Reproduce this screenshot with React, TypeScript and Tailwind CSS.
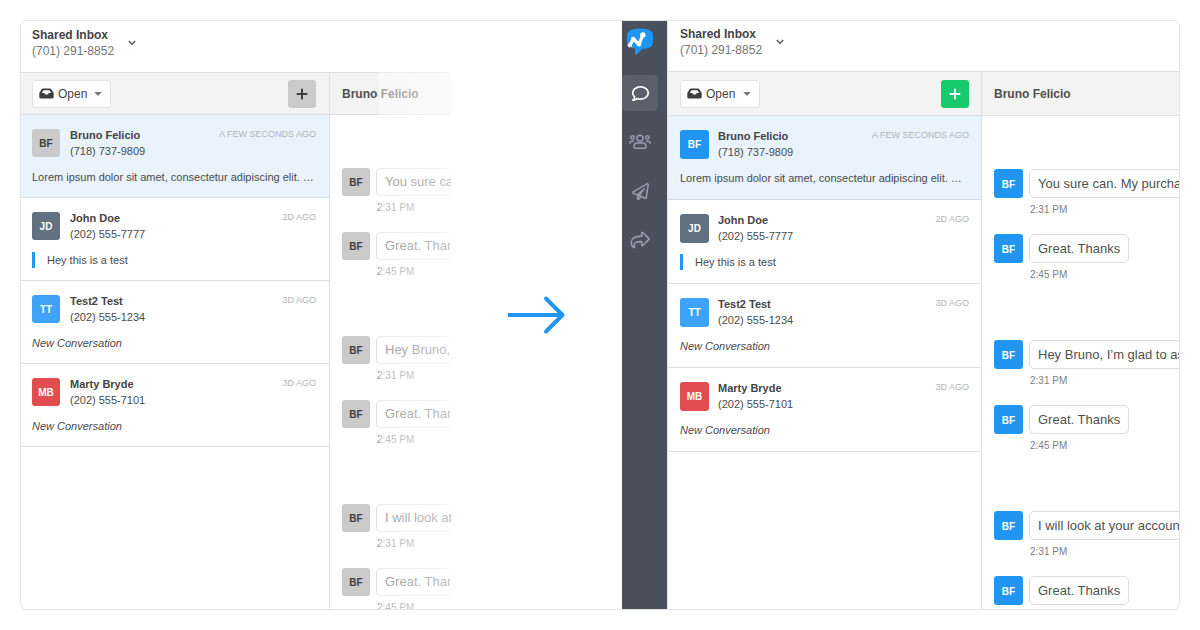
import React from "react";
import { FaRegComment, FaRegPaperPlane } from "react-icons/fa";

type Variant = "before" | "after";

type Conversation = {
  initials: string;
  name: string;
  phone: string;
  time: string;
  preview: string;
  kind: "text" | "quote" | "system";
  color: string;
};

const conversations: Conversation[] = [
  {
    initials: "BF",
    name: "Bruno Felicio",
    phone: "(718) 737-9809",
    time: "A FEW SECONDS AGO",
    preview: "Lorem ipsum dolor sit amet, consectetur adipiscing elit. …",
    kind: "text",
    color: "",
  },
  {
    initials: "JD",
    name: "John Doe",
    phone: "(202) 555-7777",
    time: "2D AGO",
    preview: "Hey this is a test",
    kind: "quote",
    color: "bg-[#627180] text-white",
  },
  {
    initials: "TT",
    name: "Test2 Test",
    phone: "(202) 555-1234",
    time: "3D AGO",
    preview: "New Conversation",
    kind: "system",
    color: "bg-[#3fa2f9] text-white",
  },
  {
    initials: "MB",
    name: "Marty Bryde",
    phone: "(202) 555-7101",
    time: "3D AGO",
    preview: "New Conversation",
    kind: "system",
    color: "bg-[#e14d50] text-white",
  },
];

const messageGroups = [
  ["You sure can. My purchase", "Great. Thanks"],
  ["Hey Bruno, I’m glad to assist", "Great. Thanks"],
  ["I will look at your account", "Great. Thanks"],
];

const ownColor = {
  before: "bg-[#cacaca] text-[#3d3d3d]",
  after: "bg-[#2095f2] text-white",
};

function Avatar({ initials, color, variant }: { initials: string; color: string; variant: Variant }) {
  const size = variant === "after" ? "size-[29px]" : "size-7";
  return (
    <span className={`flex shrink-0 items-center justify-center rounded-[3px] pt-px text-[10px] font-bold ${size} ${color}`}>
      {initials}
    </span>
  );
}

function InboxHeader({ variant }: { variant: Variant }) {
  const box = variant === "after" ? "h-[51px] pl-3 pt-[5px]" : "h-[52px] pl-[11px] pt-1.5";
  return (
    <header className={`shrink-0 border-b border-[#dfdfdf] ${box}`}>
      <button type="button" aria-haspopup="menu" className="flex items-center gap-3.5 text-left">
        <span className="flex flex-col text-[12px] leading-4 whitespace-nowrap">
          <strong className="text-[#444444]">Shared Inbox</strong>
          <span className="text-[#757575]">(701) 291-8852</span>
        </span>
        <svg viewBox="0 0 8 6" className="h-1.5 w-2" fill="none" stroke="#666" strokeWidth="1.6" aria-hidden="true">
          <path d="M0.8 1 L4 4.4 L7.2 1" />
        </svg>
      </button>
    </header>
  );
}

function Toolbar({ variant }: { variant: Variant }) {
  const after = variant === "after";
  return (
    <div
      className={`flex shrink-0 items-center justify-between border-b border-[#dfdfdf] bg-[#f3f3f3] ${
        after ? "h-11 pl-3 pr-3" : "h-[42px] pl-[11px] pr-[13px]"
      }`}
    >
      <label
        className={`flex h-7 items-center rounded-[3px] border border-[#e2e2e2] bg-white px-1.5 ${
          after ? "w-20" : "w-[79px]"
        }`}
      >
        <svg viewBox="0 0 15 11" className="h-[11px] w-[15px] shrink-0" fill="#3d3d3d" aria-hidden="true">
          <path
            fillRule="evenodd"
            d="M4.300.5h6.400c.7 0 1.200.3 1.600.8l2.100 3.200c.2.3.3.7.3 1v3.600c0 .8-.6 1.400-1.400 1.400H1.700C.9 10.500.3 9.900.3 9.100V5.500c0-.3.1-.7.3-1l2.100-3.200c.4-.5.900-.8 1.600-.8zM4.500 2.300 2.700 5.100h2.600l.9 1.500h2.600l.9-1.500h2.600L10.500 2.300z"
          />
        </svg>
        <select aria-label="Conversation status" className="ml-1 flex-1 appearance-none bg-transparent text-[12px] text-[#444444] outline-none">
          <option>Open</option>
        </select>
        <svg viewBox="0 0 8 4" className="mr-0.5 h-1 w-2 shrink-0" fill="#777" aria-hidden="true">
          <path d="M0.300 0h7.400L4 4z" />
        </svg>
      </label>
      <button
        type="button"
        aria-label="New conversation"
        className={`flex size-7 items-center justify-center rounded-[3px] ${
          after ? "bg-[#17cb6c] text-white" : "bg-[#cacaca] text-[#3d3d3d]"
        }`}
      >
        <svg viewBox="0 0 12 12" className="size-3" stroke="currentColor" strokeWidth="2" strokeLinecap="round" aria-hidden="true">
          <path d="M6 1.500v9M1.500 6h9" />
        </svg>
      </button>
    </div>
  );
}

function ConversationRow({ item, selected, variant }: { item: Conversation; selected: boolean; variant: Variant }) {
  const after = variant === "after";
  const pad = after ? "pl-3 pr-3 pb-[13px]" : "pl-[11px] pr-[13px] pb-3";
  return (
    <li
      className={`flex flex-col gap-2.5 border-b pt-3 text-[11px] leading-4 text-[#4a4a4a] ${pad} ${
        selected ? "border-[#d5dde4] bg-[#e8f3fe]" : "border-[#dfdfdf]"
      }`}
    >
      <div className="flex h-8 items-start">
        <div className="pt-0.5">
          <Avatar initials={item.initials} color={item.color || ownColor[variant]} variant={variant} />
        </div>
        <div className={`flex min-w-0 flex-1 flex-col whitespace-nowrap ${after ? "ml-[9px]" : "ml-2.5"}`}>
          <strong className="text-[#444444]">{item.name}</strong>
          <span>{item.phone}</span>
        </div>
        <time className="text-[9px] leading-[14px] whitespace-nowrap text-[#b0b3b6]">{item.time}</time>
      </div>
      {item.kind === "quote" ? (
        <blockquote className="border-l-3 border-[#2095f2] pl-3">{item.preview}</blockquote>
      ) : (
        <p className={`overflow-hidden whitespace-nowrap ${item.kind === "system" ? "italic" : ""}`}>{item.preview}</p>
      )}
    </li>
  );
}

function Message({ text, time, variant }: { text: string; time: string; variant: Variant }) {
  const bubble = variant === "after" ? "h-[29px]" : "h-7";
  return (
    <li className="flex items-start gap-1.5">
      <Avatar initials="BF" color={ownColor[variant]} variant={variant} />
      <div className="flex flex-col items-start whitespace-nowrap">
        <p className={`flex items-center rounded-[5px] border border-[#dcdcdc] px-2 text-[13px] text-[#505050] ${bubble}`}>{text}</p>
        <time className="mt-1 pl-px text-[10px] leading-4 text-[#808080]">{time}</time>
      </div>
    </li>
  );
}

function Thread({ variant }: { variant: Variant }) {
  const after = variant === "after";
  return (
    <section className="flex min-w-0 flex-1 flex-col overflow-hidden">
      <h2
        className={`flex shrink-0 items-center border-b border-[#dfdfdf] bg-[#f3f3f3] pl-3 text-[12px] font-bold whitespace-nowrap text-[#505050] ${
          after ? "h-11" : "h-[42px]"
        }`}
      >
        Bruno Felicio
      </h2>
      <div className={`flex flex-col pt-[53px] pl-3 ${after ? "gap-[57px]" : "gap-14"}`}>
        {messageGroups.map(([first, second]) => (
          <ul key={first} className="flex flex-col gap-4">
            <Message text={first} time="2:31 PM" variant={variant} />
            <Message text={second} time="2:45 PM" variant={variant} />
          </ul>
        ))}
      </div>
    </section>
  );
}

function Inbox({ variant }: { variant: Variant }) {
  const after = variant === "after";
  return (
    <div className={`flex min-w-0 flex-1 flex-col overflow-hidden ${after ? "border-l border-[#e2e2e2]" : ""}`}>
      <InboxHeader variant={variant} />
      <div className="flex min-h-0 flex-1">
        <section className={`shrink-0 border-r border-[#dfdfdf] ${after ? "w-[314px]" : "w-[309px]"}`}>
          <Toolbar variant={variant} />
          <ul>
            {conversations.map((item, index) => (
              <ConversationRow key={item.name} item={item} selected={index === 0} variant={variant} />
            ))}
          </ul>
        </section>
        <Thread variant={variant} />
      </div>
    </div>
  );
}

function Logo() {
  return (
    <svg viewBox="0 0 28 28" className="size-7" aria-hidden="true">
      <path
        fill="#2095f2"
        d="M7.500 1.200C12 .3 17 .3 21.500 1.200c3.200.6 4.900 2.200 5.300 5.300.4 2.800.4 5.800 0 8.500-.5 3.100-2.100 4.700-5.300 5.200-1.700.3-3.200.5-4.800.6L10.500 26.600c-.7.6-1.500.2-1.500-.7v-5.400C4 20 1.700 18.200 1.200 15c-.4-2.800-.4-5.700 0-8.500.4-3.100 2.600-4.700 6.300-5.300z"
      />
      <path d="M4 17.300 7.300 11 13 16.500 16.800 7" fill="none" stroke="#fff" strokeWidth="3.200" strokeLinejoin="round" />
      <g fill="#fff">
        <circle cx="3.800" cy="17.300" r="2.100" />
        <circle cx="7.300" cy="11" r="2.200" />
        <circle cx="13" cy="16.200" r="2.300" />
        <circle cx="16.800" cy="7" r="2.700" />
      </g>
    </svg>
  );
}

function UsersIcon() {
  return (
    <svg viewBox="0 0 22 16" className="h-4 w-[22px]" fill="none" stroke="currentColor" strokeWidth="1.500" strokeLinecap="round" aria-hidden="true">
      <circle cx="11" cy="4.200" r="3" />
      <circle cx="3.600" cy="3.500" r="1.700" />
      <circle cx="18.400" cy="3.500" r="1.700" />
      <path d="M8.300 9h5.400c1.900 0 3.200 1.300 3.200 3.100v1.200c0 .6-.4 1-1 1H6.100c-.6 0-1-.4-1-1v-1.200C5.100 10.300 6.400 9 8.300 9z" />
      <path d="M.9 9.500c0-1.400.8-2.200 2-2.200h1.500M21.100 9.500c0-1.400-.8-2.200-2-2.200h-1.500" />
    </svg>
  );
}

function ShareIcon() {
  return (
    <svg viewBox="0 0 20 18" className="h-[18px] w-5" fill="none" stroke="currentColor" strokeWidth="1.600" strokeLinejoin="round" aria-hidden="true">
      <path d="M11.700 1.700v3.400C5.200 5.200 1.200 6.700 1.200 11.700c0 2 .9 3.700 2.400 4.700.6.4 1.100 0 .9-.7-1.100-4 1.300-5 7.200-5.100v3.500c0 .6.6.8 1 .4l6-5.800c.4-.4.4-.9 0-1.300l-6-5.900c-.4-.4-1-.2-1 .2z" />
    </svg>
  );
}

const navItems = [
  { label: "Conversations", icon: <FaRegComment className="size-[17px]" />, active: true },
  { label: "Contacts", icon: <UsersIcon />, active: false },
  { label: "Campaigns", icon: <FaRegPaperPlane className="size-[17px]" />, active: false },
  { label: "Forwarding", icon: <ShareIcon />, active: false },
];

function Sidebar() {
  return (
    <nav aria-label="Main" className="flex w-[45px] shrink-0 flex-col gap-[13px] bg-[#4a505c]">
      <a href="#home" aria-label="Home" className="flex h-[41px] items-end pl-1 pb-1.5">
        <Logo />
      </a>
      {navItems.map((item) => (
        <a
          key={item.label}
          href={`#${item.label.toLowerCase()}`}
          aria-label={item.label}
          className={`flex size-9 items-center justify-center rounded-[4px] ${
            item.active ? "bg-[#5a606c] text-white" : "text-[#949cae]"
          }`}
        >
          {item.icon}
        </a>
      ))}
    </nav>
  );
}

export default function App() {
  return (
    <main className="h-screen bg-white p-5 font-['Liberation_Sans',Arial,sans-serif]">
      <div className="grid h-full grid-cols-[430fr_171fr_557fr] overflow-hidden rounded-[6px] border border-[#e5e5e5]">
        <div className="relative flex min-h-0 min-w-0 overflow-hidden">
          <Inbox variant="before" />
          <div className="pointer-events-none absolute inset-y-0 right-0 w-[72px] bg-linear-to-r from-white/45 to-white/65" />
        </div>
        <div className="flex items-center justify-center">
          <svg viewBox="0 0 58 40" className="h-10 w-[58px]" fill="none" stroke="#2095f2" strokeWidth="4" aria-hidden="true">
            <path d="M0 20h55" />
            <path d="M38 3.500 54.500 20 38 36.500" strokeLinecap="round" strokeLinejoin="round" />
          </svg>
        </div>
        <div className="flex min-h-0 min-w-0 overflow-hidden">
          <Sidebar />
          <Inbox variant="after" />
        </div>
      </div>
    </main>
  );
}
